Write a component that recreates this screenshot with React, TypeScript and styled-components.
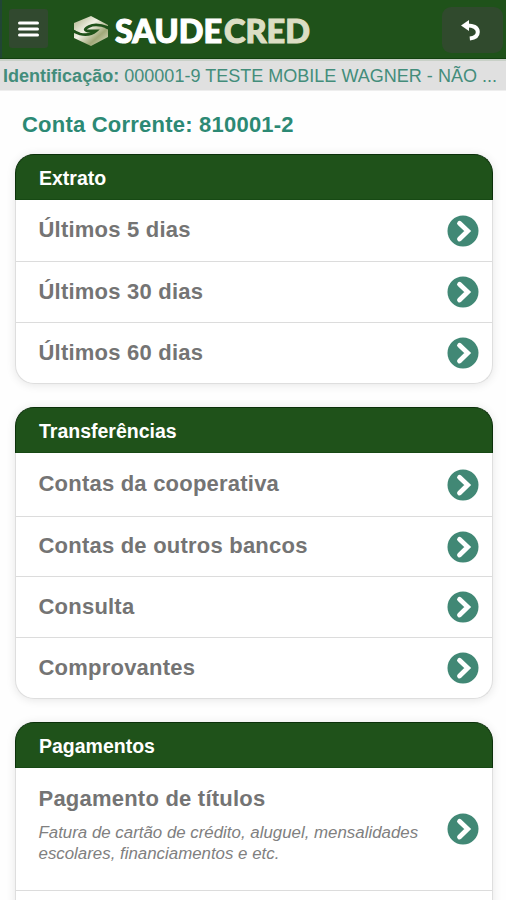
import React from "react";
import styled, { createGlobalStyle } from "styled-components";

const GlobalStyle = createGlobalStyle`
  * { box-sizing: border-box; }
  html, body { margin: 0; height: 100%; overflow: hidden; }
  body { background: #fefefe; font-family: "Liberation Sans", Arial, sans-serif; }
`;

const Screen = styled.div`
  height: 900px;
  overflow: hidden;
`;

const TopBar = styled.header`
  display: flex;
  align-items: flex-start;
  height: 59px;
  padding: 9px 3px 0 9px;
  background: #1f521a;
  border-bottom: 1px solid #12400f;
  box-shadow: inset 2px 0 0 #214535;
`;

const BarButton = styled.button<{ $wide?: boolean }>`
  display: flex;
  align-items: center;
  justify-content: center;
  width: ${({ $wide }) => ($wide ? 61 : 39)}px;
  height: ${({ $wide }) => ($wide ? 46 : 39)}px;
  margin-top: ${({ $wide }) => ($wide ? -2 : 0)}px;
  padding: ${({ $wide }) => ($wide ? "0 4px 0 0" : "0")};
  border: 0;
  border-radius: ${({ $wide }) => ($wide ? 9 : 3)}px;
  background: ${({ $wide }) => ($wide ? "#304a2d" : "#31492f")};
`;

const Brand = styled.div`
  display: flex;
  flex: 1;
  margin-left: 26px;
`;

const Wordmark = styled.svg`
  display: block;
  margin-left: 5px;
  overflow: visible;
  font-family: Lato, sans-serif;
  font-weight: 900;
  font-size: 32px;
  stroke-width: 1.1px;
`;

const AccountStrip = styled.div`
  height: 32px;
  padding: 0 6px 0 3px;
  border-top: 2px solid #c8d0c7;
  border-bottom: 1px solid #eeeeee;
  background: #e0e0e0;
  color: #438d7b;
  font-size: 18.05px;
  line-height: 30px;
  white-space: nowrap;
  overflow: hidden;
`;

const Account = styled.h1`
  margin: 0 0 0 22px;
  height: 63px;
  padding-top: 20px;
  color: #2c8974;
  font-size: 22px;
  line-height: 28px;
  letter-spacing: 0.22px;
`;

const Card = styled.section`
  width: 478px;
  margin: 0 0 23px 15px;
  border: 1px solid #dedede;
  border-top: 0;
  border-radius: 19px;
  background: #fff;
  box-shadow: 0 1px 10px rgba(0, 0, 0, 0.1);
`;

const CardHeader = styled.h2`
  margin: 0 -1px;
  height: 46px;
  padding-left: 23px;
  border: 1px solid #0b300a;
  border-bottom-color: #174914;
  border-radius: 19px 19px 0 0;
  background: #1f521a;
  color: #fff;
  font-size: 19.5px;
  line-height: 46px;
`;

const Row = styled.div<{ $height: number }>`
  display: flex;
  align-items: center;
  justify-content: space-between;
  height: ${({ $height }) => $height}px;
  padding: 0 13px 0 22.5px;
  border-bottom: 1px solid #dcdcdc;
  &:last-child { border-bottom: 0; }
`;

const RowText = styled.div<{ $tall: boolean }>`
  padding-bottom: ${({ $tall }) => ($tall ? 10 : 1)}px;
`;

const Label = styled.div`
  color: #747474;
  font-size: 22px;
  font-weight: bold;
  line-height: 28px;
  letter-spacing: 0.22px;
`;

const Note = styled.p`
  margin: 9px 0 0;
  color: #808080;
  font-size: 16.87px;
  font-style: italic;
  line-height: 21px;
  white-space: nowrap;
`;

const ChevronIcon = () => (
  <svg width="32" height="32" viewBox="0 0 32 32">
    <circle cx="16" cy="16" r="15.5" fill="#418875" />
    <path d="m12.500 8.300 8.200 7.700-8.200 8" fill="none" stroke="#fff" strokeWidth="4.800" strokeLinecap="round" />
  </svg>
);

const MenuIcon = () => (
  <svg width="21" height="16" viewBox="0 0 21 16">
    <path d="M1.5 2h18M1.5 8h18M1.5 14h18" stroke="#fff" strokeWidth="3" strokeLinecap="round" />
  </svg>
);

const BackIcon = () => (
  <svg width="20" height="21" viewBox="0 0 20 21">
    <path d="M0 5.500 8 0v11Z" fill="#fff" />
    <path d="M5 5.500C12 5 16.800 7.500 16.800 12c0 3.500-3 6-8 6.500" fill="none" stroke="#fff" strokeWidth="4" />
  </svg>
);

const BrandMark = () => (
  <svg width="36" height="44" viewBox="74 9 36 44">
    <defs>
      <linearGradient id="markFill" x1="0" y1="0" x2="1" y2="1">
        <stop offset="0" stopColor="#aab084" />
        <stop offset=".4" stopColor="#f2f2e6" />
        <stop offset=".7" stopColor="#a0a878" />
        <stop offset="1" stopColor="#dfe2c9" />
      </linearGradient>
    </defs>
    <path d="M74 23 91 16l17 9v12l-17 9-17-8Z" fill="url(#markFill)" />
    <path d="m73 31 7 3q10 2 16-3h-8q-6-1 1-4.500 7-3.500 19 1" fill="none" stroke="#1f521a" strokeWidth="2.800" />
    <path d="m73 29 3 2-3 2ZM109 26l-4 2 4 2Z" fill="#1f521a" />
  </svg>
);

type Item = { label: string; height: number; note?: [string, string] };

const sections: { title: string; items: Item[] }[] = [
  {
    title: "Extrato",
    items: [
      { label: "Últimos 5 dias", height: 62 },
      { label: "Últimos 30 dias", height: 61 },
      { label: "Últimos 60 dias", height: 60 },
    ],
  },
  {
    title: "Transferências",
    items: [
      { label: "Contas da cooperativa", height: 64 },
      { label: "Contas de outros bancos", height: 60 },
      { label: "Consulta", height: 61 },
      { label: "Comprovantes", height: 60 },
    ],
  },
  {
    title: "Pagamentos",
    items: [
      {
        label: "Pagamento de títulos",
        height: 123,
        note: [
          "Fatura de cartão de crédito, aluguel, mensalidades",
          "escolares, financiamentos e etc.",
        ],
      },
      { label: "", height: 61 },
    ],
  },
];

export default function App() {
  return (
    <Screen>
      <GlobalStyle />
      <TopBar>
        <BarButton aria-label="Menu"><MenuIcon /></BarButton>
        <Brand>
          <BrandMark />
          <Wordmark width="200" height="44">
            <text x="0" y="34" textLength="107" lengthAdjust="spacingAndGlyphs" fill="#fff" stroke="#fff">SAUDE</text>
            <text x="109" y="34" textLength="86" lengthAdjust="spacingAndGlyphs" fill="#dcdec4" stroke="#dcdec4">CRED</text>
          </Wordmark>
        </Brand>
        <BarButton $wide aria-label="Voltar"><BackIcon /></BarButton>
      </TopBar>
      <AccountStrip>
        <b>Identificação:</b> 000001-9 TESTE MOBILE WAGNER - NÃO ...
      </AccountStrip>
      <Account>Conta Corrente: 810001-2</Account>
      {sections.map((section) => (
        <Card key={section.title}>
          <CardHeader>{section.title}</CardHeader>
          {section.items.map((item) => (
            <Row key={item.label} $height={item.height}>
              <RowText $tall={Boolean(item.note)}>
                <Label>{item.label}</Label>
                {item.note && <Note>{item.note[0]}<br />{item.note[1]}</Note>}
              </RowText>
              <ChevronIcon />
            </Row>
          ))}
        </Card>
      ))}
    </Screen>
  );
}
